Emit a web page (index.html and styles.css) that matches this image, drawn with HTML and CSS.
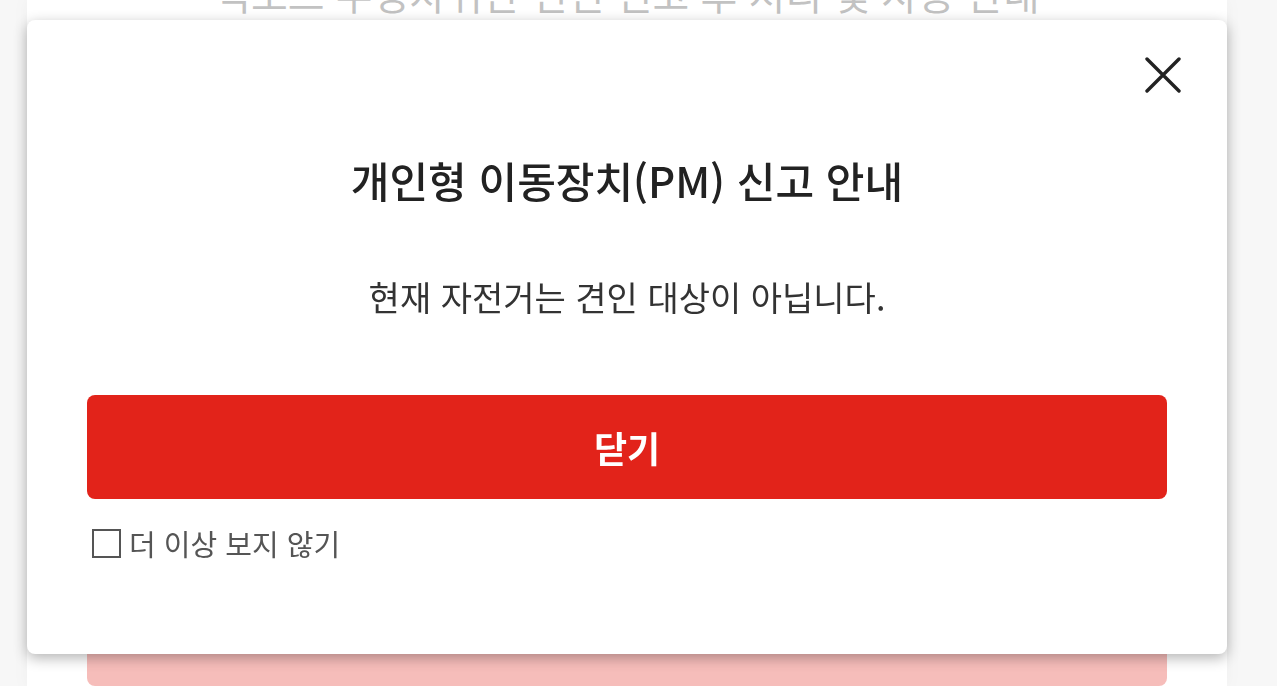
FILE: index.html
```html
<!DOCTYPE html>
<html lang="ko">
<head>
    <meta charset="UTF-8">
    <meta name="viewport" content="width=device-width, initial-scale=1.0">
    <title>개인형 이동장치(PM) 신고 안내</title>
    <link rel="stylesheet" href="styles.css">
</head>
<body>
    <!-- 뒤쪽 페이지 -->
    <div class="page">
        <h2 class="page-title">킥보드 주정차위반 견인 신고 후 처리 및 사용 안내</h2>
        <div class="page-space"></div>
        <button class="page-btn">신고</button>
    </div>

    <div class="dim"></div>

    <!-- 안내 팝업 -->
    <div class="modal">
        <button class="modal-close" aria-label="닫기">
            <svg width="36" height="36" viewBox="0 0 36 36">
                <path d="M2 2 L34 34 M34 2 L2 34" stroke="#222" stroke-width="3.4" stroke-linecap="round"/>
            </svg>
        </button>
        <h1 class="modal-title">개인형 이동장치(PM) 신고 안내</h1>
        <p class="modal-text">현재 자전거는 견인 대상이 아닙니다.</p>
        <button class="modal-btn">닫기</button>
        <label class="modal-check">
            <span class="check-box"></span>
            <span>더 이상 보지 않기</span>
        </label>
    </div>
</body>
</html>
```

FILE: styles.css
```css
body {
    font-family: 'Noto Sans CJK KR', 'Noto Sans', sans-serif;
    margin: 0;
    padding: 0 0 0 27px;
    background: #e4e4e4;
    color: #333;
    height: 686px;
    overflow: hidden;
}
.page {
    width: 1200px;
    height: 686px;
    background: #fff;
    box-shadow: 0 0 14px rgba(0, 0, 0, 0.12);
    display: flex;
    flex-direction: column;
    align-items: center;
}
.page-title {
    margin: -36px 0 0;
    font-size: 40px;
    font-weight: 400;
    color: #333;
    white-space: nowrap;
}
.page-space {
    flex: 1;
}
.page-btn {
    width: 1080px;
    height: 104px;
    flex: none;
    border: none;
    border-radius: 8px;
    background: #e2231a;
    color: #fff;
    font-family: inherit;
    font-size: 36px;
    font-weight: 700;
}
.dim {
    position: fixed;
    inset: 0;
    background: rgba(255, 255, 255, 0.7);
}
.modal {
    position: fixed;
    left: 27px;
    top: 20px;
    width: 1200px;
    height: 634px;
    box-sizing: border-box;
    padding: 132px 60px 0;
    background: #fff;
    border-radius: 8px;
    box-shadow: 0 4px 14px rgba(0, 0, 0, 0.3);
    display: flex;
    flex-direction: column;
    align-items: center;
}
.modal-close {
    position: absolute;
    top: 37px;
    right: 46px;
    width: 36px;
    height: 36px;
    padding: 0;
    border: none;
    background: none;
    cursor: pointer;
}
.modal-title {
    margin: 0;
    font-size: 42px;
    line-height: 56px;
    font-weight: 500;
    color: #222;
}
.modal-text {
    margin: 66px 0 0;
    font-size: 34px;
    line-height: 45px;
    font-weight: 400;
    color: #333;
}
.modal-btn {
    margin-top: 76px;
    width: 100%;
    height: 104px;
    flex: none;
    border: none;
    border-radius: 8px;
    background: #e2231a;
    color: #fff;
    font-family: inherit;
    font-size: 36px;
    font-weight: 700;
    cursor: pointer;
}
.modal-check {
    align-self: flex-start;
    margin: 24px 0 0 5px;
    display: flex;
    align-items: center;
    gap: 8px;
    font-size: 29px;
    line-height: 41px;
    color: #555;
}
.check-box {
    width: 29px;
    height: 29px;
    box-sizing: border-box;
    border: 2px solid #555;
}
```
